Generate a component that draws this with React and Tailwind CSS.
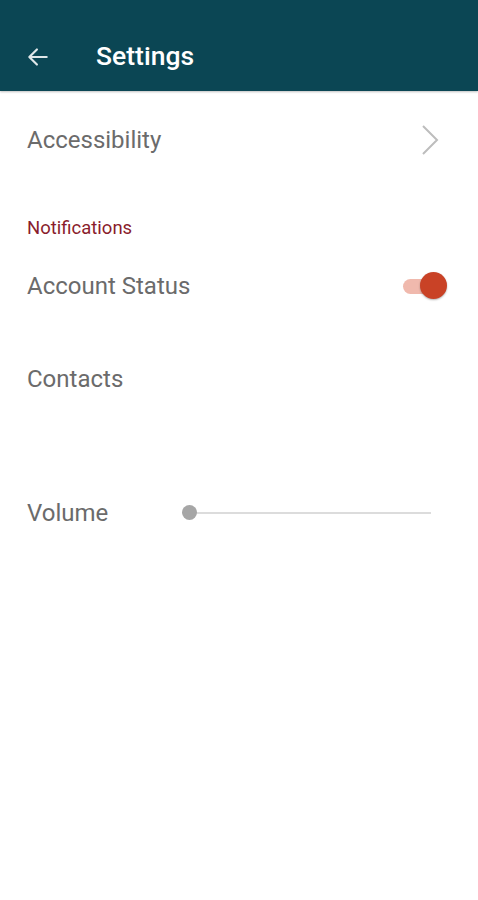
import React from 'react';

const Row = ({ children, className = '' }) => (
  <div className={`flex items-center justify-between px-[27px] ${className}`}>{children}</div>
);

const App = () => {
  return (
    <div className="w-[478px] h-[900px] bg-white font-['Roboto',sans-serif] overflow-hidden">
      {/* App bar */}
      <div className="h-[91px] bg-[#0b4654] flex items-center pt-[22px] shadow-[0_1px_2px_rgba(0,0,0,0.25)]">
        <svg width="26" height="26" viewBox="0 0 24 24" className="ml-[25px]" fill="none" stroke="#dfe7e9" strokeWidth="2" strokeLinecap="round" strokeLinejoin="round">
          <path d="M20 12H5" />
          <path d="M11 5l-7 7 7 7" />
        </svg>
        <h1 className="ml-[45px] text-white text-[26.5px] font-medium leading-none">Settings</h1>
      </div>

      <Row className="h-[98px]">
        <span className="text-[24px] text-[#6b6b6b]">Accessibility</span>
        <svg width="22" height="32" viewBox="0 0 22 32" fill="none" stroke="#bdbdbd" strokeWidth="2" className="mr-[10px]">
          <path d="M4 2l14 14-14 14" />
        </svg>
      </Row>

      <div className="h-[76px] flex items-center px-[27px] pt-[4px] text-[18.5px] text-[#8a1c2c]">Notifications</div>

      <Row className="h-[42px]">
        <span className="text-[24px] text-[#6b6b6b]">Account Status</span>
        <div className="relative w-[44px] h-[28px] mr-[4px] flex items-center">
          <div className="w-[36px] h-[15px] rounded-full bg-[#f0b9ad]"></div>
          <div className="absolute right-[0px] top-[0px] w-[27px] h-[27px] rounded-full bg-[#c94226] shadow-[0_1px_2px_rgba(0,0,0,0.3)]"></div>
        </div>
      </Row>

      <Row className="h-[56px] mt-[44px]">
        <span className="text-[24px] text-[#6b6b6b]">Contacts</span>
      </Row>

      <div className="h-[56px] mt-[78px] flex items-center px-[27px]">
        <span className="w-[155px] text-[24px] text-[#6b6b6b]">Volume</span>
        <div className="relative flex-1 mr-[20px] h-[16px] flex items-center">
          <div className="w-full h-[2px] bg-[#dcdcdc]"></div>
          <div className="absolute left-0 top-[0px] w-[15px] h-[15px] rounded-full bg-[#a6a6a6]"></div>
        </div>
      </div>
    </div>
  );
};

export default App;
